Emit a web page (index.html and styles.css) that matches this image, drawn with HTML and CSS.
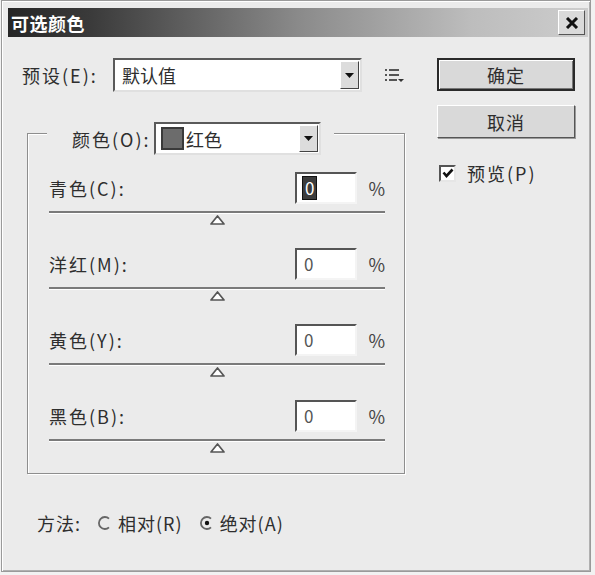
FILE: index.html
```html
<!DOCTYPE html>
<html lang="zh-CN">
<head>
    <meta charset="UTF-8">
    <meta name="viewport" content="width=device-width, initial-scale=1.0">
    <title>可选颜色</title>
    <link rel="stylesheet" href="styles.css">
</head>
<body>
    <div class="window">
        <div class="titlebar">
            <span class="title">可选颜色</span>
            <span class="close-btn">
                <svg width="14" height="12" viewBox="0 0 14 12"><path d="M2 1 L12 11 M12 1 L2 11" stroke="#111" stroke-width="3"/></svg>
            </span>
        </div>

        <div class="content">
            <div class="main">
                <div class="preset-row">
                    <span class="label preset-label">预设(E):</span>
                    <div class="select preset-select">
                        <span class="select-text">默认值</span>
                        <span class="drop-btn"><svg width="9" height="5" viewBox="0 0 9 5"><path d="M0 0 H9 L4.5 5 Z" fill="#111"/></svg></span>
                    </div>
                    <svg class="menu-icon" width="20" height="15" viewBox="0 0 20 15">
                        <rect x="0" y="1" width="2" height="2" fill="#555"/>
                        <rect x="4" y="1" width="10" height="2" fill="#555"/>
                        <rect x="0" y="6" width="2" height="2" fill="#555"/>
                        <rect x="4" y="6" width="10" height="2" fill="#555"/>
                        <rect x="0" y="11" width="2" height="2" fill="#555"/>
                        <rect x="4" y="11" width="8" height="2" fill="#555"/>
                        <path d="M13 11 H19 L16 14 Z" fill="#333"/>
                    </svg>
                </div>

                <div class="group">
                    <div class="group-head">
                        <span class="label">颜色(O):</span>
                        <div class="select color-select">
                            <span class="swatch"></span>
                            <span class="select-text">红色</span>
                            <span class="drop-btn"><svg width="9" height="5" viewBox="0 0 9 5"><path d="M0 0 H9 L4.5 5 Z" fill="#111"/></svg></span>
                        </div>
                    </div>

                    <div class="channel">
                        <div class="channel-row">
                            <span class="label">青色(C):</span>
                            <span class="num-input"><span class="num selected">0</span></span>
                            <span class="pct">%</span>
                        </div>
                        <div class="track"></div>
                        <svg class="thumb" width="15" height="11" viewBox="0 0 15 11"><path d="M7.5 1 L14 9 H1 Z" fill="#fff" stroke="#555" stroke-width="1.7" stroke-linejoin="round"/></svg>
                    </div>

                    <div class="channel">
                        <div class="channel-row">
                            <span class="label">洋红(M):</span>
                            <span class="num-input"><span class="num">0</span></span>
                            <span class="pct">%</span>
                        </div>
                        <div class="track"></div>
                        <svg class="thumb" width="15" height="11" viewBox="0 0 15 11"><path d="M7.5 1 L14 9 H1 Z" fill="#fff" stroke="#555" stroke-width="1.7" stroke-linejoin="round"/></svg>
                    </div>

                    <div class="channel">
                        <div class="channel-row">
                            <span class="label">黄色(Y):</span>
                            <span class="num-input"><span class="num">0</span></span>
                            <span class="pct">%</span>
                        </div>
                        <div class="track"></div>
                        <svg class="thumb" width="15" height="11" viewBox="0 0 15 11"><path d="M7.5 1 L14 9 H1 Z" fill="#fff" stroke="#555" stroke-width="1.7" stroke-linejoin="round"/></svg>
                    </div>

                    <div class="channel">
                        <div class="channel-row">
                            <span class="label">黑色(B):</span>
                            <span class="num-input"><span class="num">0</span></span>
                            <span class="pct">%</span>
                        </div>
                        <div class="track"></div>
                        <svg class="thumb" width="15" height="11" viewBox="0 0 15 11"><path d="M7.5 1 L14 9 H1 Z" fill="#fff" stroke="#555" stroke-width="1.7" stroke-linejoin="round"/></svg>
                    </div>
                </div>

                <div class="method-row">
                    <span class="label">方法:</span>
                    <svg class="radio" width="14" height="14" viewBox="0 0 14 14">
                        <path d="M11 2.6 A6 6 0 1 0 11 11.4" fill="none" stroke="#666" stroke-width="1.8"/>
                    </svg>
                    <span class="label">相对(R)</span>
                    <svg class="radio" width="14" height="14" viewBox="0 0 14 14">
                        <path d="M11 2.6 A6 6 0 1 0 11 11.4" fill="none" stroke="#666" stroke-width="1.8"/>
                        <circle cx="7" cy="7" r="2.2" fill="#111"/>
                    </svg>
                    <span class="label">绝对(A)</span>
                </div>
            </div>

            <div class="side">
                <div class="btn btn-default">确定</div>
                <div class="btn">取消</div>
                <div class="check-row">
                    <span class="checkbox">
                        <svg width="12" height="11" viewBox="0 0 12 11"><path d="M1.5 4.5 L4.5 8 L10.5 1.5" fill="none" stroke="#111" stroke-width="2.6"/></svg>
                    </span>
                    <span class="label">预览(P)</span>
                </div>
            </div>
        </div>
    </div>
</body>
</html>
```

FILE: styles.css
```css
/* Reset */
* {
    margin: 0;
    padding: 0;
    box-sizing: border-box;
}

body {
    font-family: "Noto Sans CJK SC", "Liberation Sans", sans-serif;
    background-color: #f2f2f2;
    color: #2e2e2e;
    width: 595px;
    height: 575px;
    overflow: hidden;
}

/* Dialog frame */
.window {
    width: 590px;
    height: 572px;
    margin-left: 1px;
    border: 1px solid #9a9a9a;
    box-shadow: inset 1px 1px 0 #ffffff, inset -1px -1px 0 #b0b0b0;
    background: #ebebeb;
    padding: 7px 2px 0 6px;
}

.titlebar {
    height: 29px;
    display: flex;
    align-items: center;
    justify-content: space-between;
    padding: 0 3px 0 3px;
    background: linear-gradient(to right, #262626 0%, #3a3a3a 14%, #8a8a8a 50%, #bdbdbd 80%, #cdcdcd 100%);
}

.title {
    color: #ffffff;
    font-size: 18px;
    font-weight: bold;
    letter-spacing: 0.5px;
}

.close-btn {
    width: 27px;
    height: 25px;
    display: flex;
    align-items: center;
    justify-content: center;
    background: #dadada;
    border: 1px solid;
    border-color: #ffffff #555555 #555555 #ffffff;
}

.content {
    display: flex;
}

.main {
    width: 429px;
    padding-left: 14px;
}

.label {
    font-size: 18px;
    letter-spacing: 2px;
    white-space: nowrap;
}

/* Preset row */
.preset-row {
    display: flex;
    align-items: center;
    margin-top: 21px;
}

.preset-label {
    width: 91px;
}

.select {
    display: flex;
    align-items: center;
    background: #ffffff;
    border: 2px solid;
    border-color: #5a5a5a #e0e0e0 #e0e0e0 #5a5a5a;
    padding: 1px;
}

.preset-select {
    width: 249px;
    height: 34px;
}

.select-text {
    flex: 1;
    font-size: 18px;
    padding-left: 6px;
}

.drop-btn {
    width: 19px;
    height: 100%;
    display: flex;
    align-items: center;
    justify-content: center;
    background: #dcdcdc;
    border: 1px solid;
    border-color: #ffffff #444444 #444444 #ffffff;
}

.menu-icon {
    margin-left: 23px;
}

/* Group box */
.group {
    margin-top: 41px;
    margin-left: 5px;
    width: 378px;
    border: 1px solid #8e8e8e;
    box-shadow: inset 1px 1px 0 #ffffff, 1px 1px 0 #ffffff;
    padding: 0 19px 14px 21px;
}

.group-head {
    display: flex;
    align-items: center;
    margin-top: -12px;
    margin-left: -2px;
    width: fit-content;
    background: #ebebeb;
    padding: 0 13px 0 25px;
}

.group-head .label {
    width: 82px;
}

.color-select {
    width: 167px;
    height: 33px;
}

.swatch {
    width: 23px;
    height: 23px;
    margin-left: 4px;
    background: #6c6c6c;
    border: 2px solid #3a3a3a;
}

.color-select .select-text {
    padding-left: 2px;
}

/* Channel sliders */
.channel {
    padding-top: 17px;
    display: flex;
    flex-direction: column;
}

.channel-row {
    display: flex;
    align-items: center;
    height: 32px;
}

.channel-row .label {
    flex: 1;
}

.num-input {
    width: 62px;
    height: 32px;
    background: #ffffff;
    border: 2px solid;
    border-color: #555555 #f4f4f4 #f4f4f4 #555555;
    display: flex;
    align-items: center;
    padding-left: 5px;
}

.num {
    font-size: 17px;
    color: #555555;
    line-height: 22px;
    padding: 0 2px;
}

.num.selected {
    background: #3c3c3c;
    color: #ffffff;
    border: 1px solid #111;
}

.pct {
    width: 28px;
    text-align: right;
    font-size: 18px;
    color: #444;
}

.track {
    margin-top: 7px;
    height: 3px;
    background: #7a7a7a;
    border-bottom: 1px solid #ffffff;
}

.thumb {
    align-self: center;
    margin-top: 1px;
    margin-bottom: 5px;
}

/* Method row */
.method-row {
    display: flex;
    align-items: center;
    margin-top: 36px;
    padding-left: 15px;
}

.method-row .label {
    letter-spacing: 1px;
}

.method-row .radio {
    margin: 0 6px 0 17px;
}

/* Right column */
.side {
    width: 138px;
    margin-top: 21px;
}

.btn {
    height: 33px;
    display: flex;
    align-items: center;
    justify-content: center;
    font-size: 18px;
    letter-spacing: 1px;
    background: #d9d9d9;
    border: 1px solid;
    border-color: #ffffff #555555 #555555 #ffffff;
    box-shadow: 1px 1px 0 #9a9a9a;
}

.btn-default {
    border: 2px solid #2a2a2a;
    box-shadow: inset 1px 1px 0 #ffffff, inset -1px -1px 0 #777;
}

.btn + .btn {
    margin-top: 14px;
}

.check-row {
    display: flex;
    align-items: center;
    gap: 11px;
    margin-top: 22px;
    padding-left: 2px;
}

.checkbox {
    width: 17px;
    height: 17px;
    background: #ffffff;
    border: 2px solid;
    border-color: #555555 #e6e6e6 #e6e6e6 #555555;
    display: flex;
    align-items: center;
    justify-content: center;
}
```
